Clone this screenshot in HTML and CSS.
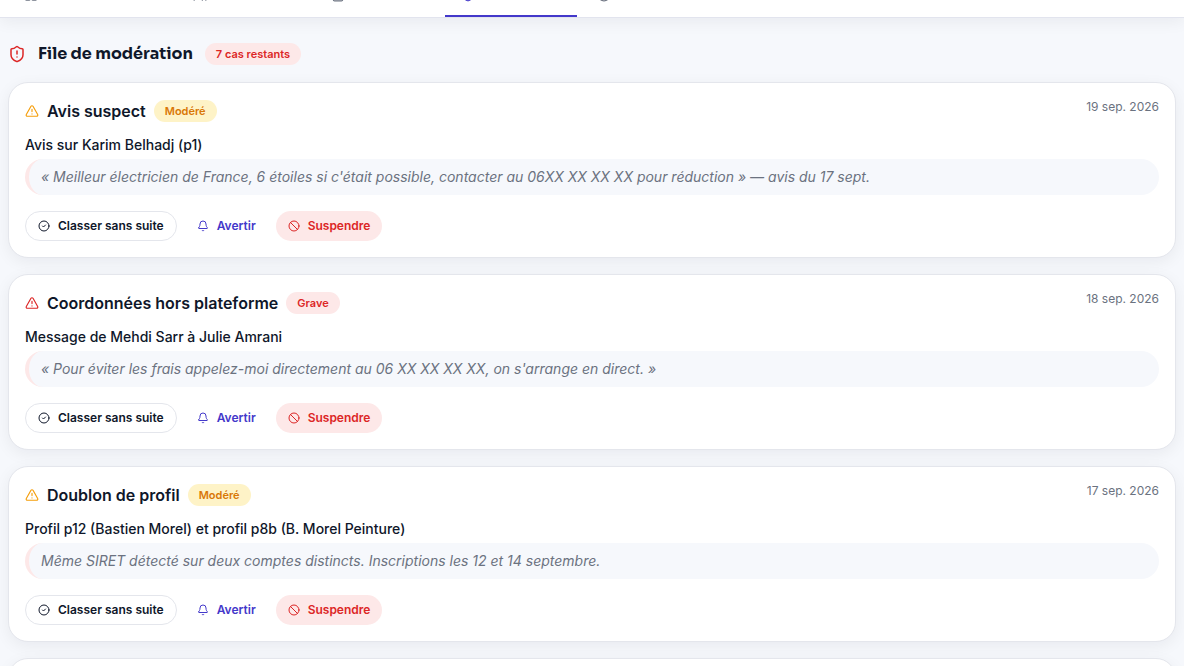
FILE: index.html
```html
<!DOCTYPE html>
<html lang="fr">
<head>
<meta charset="utf-8">
<meta name="viewport" content="width=device-width, initial-scale=1">
<title>File de modération</title>
<link rel="stylesheet" href="styles.css">
</head>
<body>
<svg class="sprite" aria-hidden="true">
  <symbol id="shield" viewBox="0 0 24 24"><path d="M20 13c0 5-3.500 7.500-7.660 8.950a1 1 0 0 1-.67-.01C7.500 20.500 4 18 4 13V6a1 1 0 0 1 1-1c2 0 4.500-1.200 6.240-2.720a1.170 1.170 0 0 1 1.520 0C14.510 3.810 17 5 19 5a1 1 0 0 1 1 1z"/><path d="M12 8v4M12 16h.01"/></symbol>
  <symbol id="triangle" viewBox="0 0 24 24"><path d="m21.730 18-8-14a2 2 0 0 0-3.480 0l-8 14A2 2 0 0 0 4 21h16a2 2 0 0 0 1.730-3"/><path d="M12 9v4M12 17h.01"/></symbol>
  <symbol id="check" viewBox="0 0 24 24"><circle cx="12" cy="12" r="10"/><path d="m9 12 2 2 4-4"/></symbol>
  <symbol id="bell" viewBox="0 0 24 24"><path d="M10.268 21a2 2 0 0 0 3.464 0"/><path d="M3.262 15.326A1 1 0 0 0 4 17h16a1 1 0 0 0 .740-1.673C19.410 13.956 18 12.499 18 8A6 6 0 0 0 6 8c0 4.499-1.411 5.956-2.738 7.326"/></symbol>
  <symbol id="ban" viewBox="0 0 24 24"><circle cx="12" cy="12" r="10"/><path d="m4.900 4.900 14.200 14.200"/></symbol>
  <symbol id="grid" viewBox="0 0 24 24"><rect x="3" y="3" width="7" height="9" rx="1"/><rect x="14" y="3" width="7" height="5" rx="1"/><rect x="14" y="12" width="7" height="9" rx="1"/><rect x="3" y="16" width="7" height="5" rx="1"/></symbol>
  <symbol id="users" viewBox="0 0 24 24"><path d="M16 21v-2a4 4 0 0 0-4-4H6a4 4 0 0 0-4 4v2M22 21v-2a4 4 0 0 0-3-3.870"/><circle cx="9" cy="7" r="4"/></symbol>
  <symbol id="file" viewBox="0 0 24 24"><rect x="4" y="2" width="16" height="20" rx="2"/><path d="M8 7h8M8 12h8"/></symbol>
  <symbol id="globe" viewBox="0 0 24 24"><circle cx="12" cy="12" r="10"/><path d="M2 12h20"/></symbol>
</svg>

<nav class="tabs" aria-label="Administration">
  <a class="tab tab-overview" href="#"><svg class="icon"><use href="#grid"/></svg></a>
  <a class="tab tab-users" href="#"><svg class="icon"><use href="#users"/></svg></a>
  <a class="tab tab-files" href="#"><svg class="icon"><use href="#file"/></svg></a>
  <a class="tab tab-moderation" href="#" aria-current="page"><svg class="icon"><use href="#shield"/></svg></a>
  <a class="tab" href="#"><svg class="icon"><use href="#globe"/></svg></a>
</nav>

<main class="page">
  <header class="page-head">
    <svg class="icon icon-lg danger"><use href="#shield"/></svg>
    <h1 class="page-title">File de modération</h1>
    <span class="badge badge-danger">7 cas restants</span>
  </header>

  <article class="card">
    <header class="card-head">
      <svg class="icon warning"><use href="#triangle"/></svg>
      <h2 class="card-title">Avis suspect</h2>
      <span class="badge badge-warning">Modéré</span>
      <time class="date" datetime="2026-09-19">19 sep. 2026</time>
    </header>
    <p class="subject">Avis sur Karim Belhadj (p1)</p>
    <blockquote class="quote">« Meilleur électricien de France, 6 étoiles si c'était possible, contacter au 06XX XX XX XX pour réduction » — avis du 17 sept.</blockquote>
    <div class="actions">
      <button class="btn btn-outline" type="button"><svg class="icon icon-sm"><use href="#check"/></svg>Classer sans suite</button>
      <button class="btn btn-ghost" type="button"><svg class="icon icon-sm"><use href="#bell"/></svg>Avertir</button>
      <button class="btn btn-danger" type="button"><svg class="icon icon-sm"><use href="#ban"/></svg>Suspendre</button>
    </div>
  </article>

  <article class="card">
    <header class="card-head">
      <svg class="icon danger"><use href="#triangle"/></svg>
      <h2 class="card-title">Coordonnées hors plateforme</h2>
      <span class="badge badge-danger">Grave</span>
      <time class="date" datetime="2026-09-18">18 sep. 2026</time>
    </header>
    <p class="subject">Message de Mehdi Sarr à Julie Amrani</p>
    <blockquote class="quote">« Pour éviter les frais appelez-moi directement au 06 XX XX XX XX, on s'arrange en direct. »</blockquote>
    <div class="actions">
      <button class="btn btn-outline" type="button"><svg class="icon icon-sm"><use href="#check"/></svg>Classer sans suite</button>
      <button class="btn btn-ghost" type="button"><svg class="icon icon-sm"><use href="#bell"/></svg>Avertir</button>
      <button class="btn btn-danger" type="button"><svg class="icon icon-sm"><use href="#ban"/></svg>Suspendre</button>
    </div>
  </article>

  <article class="card">
    <header class="card-head">
      <svg class="icon warning"><use href="#triangle"/></svg>
      <h2 class="card-title">Doublon de profil</h2>
      <span class="badge badge-warning">Modéré</span>
      <time class="date" datetime="2026-09-17">17 sep. 2026</time>
    </header>
    <p class="subject">Profil p12 (Bastien Morel) et profil p8b (B. Morel Peinture)</p>
    <blockquote class="quote">Même SIRET détecté sur deux comptes distincts. Inscriptions les 12 et 14 septembre.</blockquote>
    <div class="actions">
      <button class="btn btn-outline" type="button"><svg class="icon icon-sm"><use href="#check"/></svg>Classer sans suite</button>
      <button class="btn btn-ghost" type="button"><svg class="icon icon-sm"><use href="#bell"/></svg>Avertir</button>
      <button class="btn btn-danger" type="button"><svg class="icon icon-sm"><use href="#ban"/></svg>Suspendre</button>
    </div>
  </article>

  <article class="card"></article>
</main>
</body>
</html>
```
FILE: styles.css
```css
* { box-sizing: border-box; }

html { height: 100%; overflow: hidden; }

body {
  height: 100%;
  margin: 0;
  overflow: hidden;
  background: #f6f8fc;
  color: #0f172a;
  font-family: Inter, "Liberation Sans", sans-serif;
  font-size: 14px;
  line-height: 20px;
}

h1, h2, p, blockquote { margin: 0; }

.sprite { display: none; }

.icon {
  flex: none;
  width: 14px;
  height: 14px;
  fill: none;
  stroke: currentColor;
  stroke-width: 2;
  stroke-linecap: round;
  stroke-linejoin: round;
}
.icon-sm { width: 12px; height: 12px; }
.icon-lg { width: 18px; height: 18px; }
.danger { color: #dc2626; }
.warning { color: #f59e0b; }

.tabs {
  display: flex;
  align-items: flex-end;
  gap: 4px;
  height: 18px;
  padding: 0 8px;
  overflow: hidden;
  background: #fff;
  border-bottom: 1px solid #e2e4ee;
  box-shadow: 0 4px 16px rgba(15, 23, 42, .06);
}
.tab {
  display: flex;
  padding: 12px 16px 13px;
  border-bottom: 2px solid transparent;
  color: #6b7280;
}
.tab-overview { width: 165px; }
.tab-users { width: 134px; }
.tab-files { width: 126px; }
.tab-moderation { width: 132px; border-color: #4338ca; color: #4338ca; }

.page {
  display: flex;
  flex-direction: column;
  gap: 16px;
  padding: 24px 8px;
}

.page-head {
  display: flex;
  align-items: center;
  gap: 12px;
}
.page-title {
  font-family: Sora, Inter, sans-serif;
  font-size: 16px;
  line-height: 24px;
  font-weight: 700;
}

.badge {
  padding: 3px 11px;
  border-radius: 999px;
  font-size: 11px;
  line-height: 16px;
  font-weight: 600;
}
.badge-danger { background: #fde8e8; color: #dc2626; }
.badge-warning { background: #fef3c7; color: #d97706; }

.card {
  min-height: 176px;
  padding: 16px;
  background: #fff;
  border: 1px solid #e4e6ec;
  border-radius: 20px;
  box-shadow: 0 4px 16px rgba(15, 23, 42, .06);
}
.card-head {
  display: flex;
  align-items: center;
  gap: 8px;
  height: 24px;
}
.card-title {
  font-size: 16px;
  line-height: 24px;
  font-weight: 600;
}
.date {
  align-self: flex-start;
  margin-left: auto;
  color: #6b7280;
  font-size: 12px;
  line-height: 16px;
}
.subject {
  margin-top: 12px;
  font-weight: 500;
}
.quote {
  margin-top: 4px;
  padding: 8px 12px;
  background: #f6f8fc;
  border-left: 4px solid #fde8e8;
  border-radius: 18px;
  color: #6b7280;
  font-style: italic;
}
.actions {
  display: flex;
  gap: 8px;
  margin-top: 16px;
}
.btn {
  display: inline-flex;
  align-items: center;
  gap: 8px;
  height: 30px;
  padding: 0 12px;
  border: 0;
  border-radius: 999px;
  background: transparent;
  color: inherit;
  font: 600 12px/16px Inter, "Liberation Sans", sans-serif;
}
.btn-outline { border: 1px solid #e4e6ec; background: #fff; }
.btn-ghost { color: #4338ca; }
.btn-danger { background: #fde8e8; color: #dc2626; }
```
